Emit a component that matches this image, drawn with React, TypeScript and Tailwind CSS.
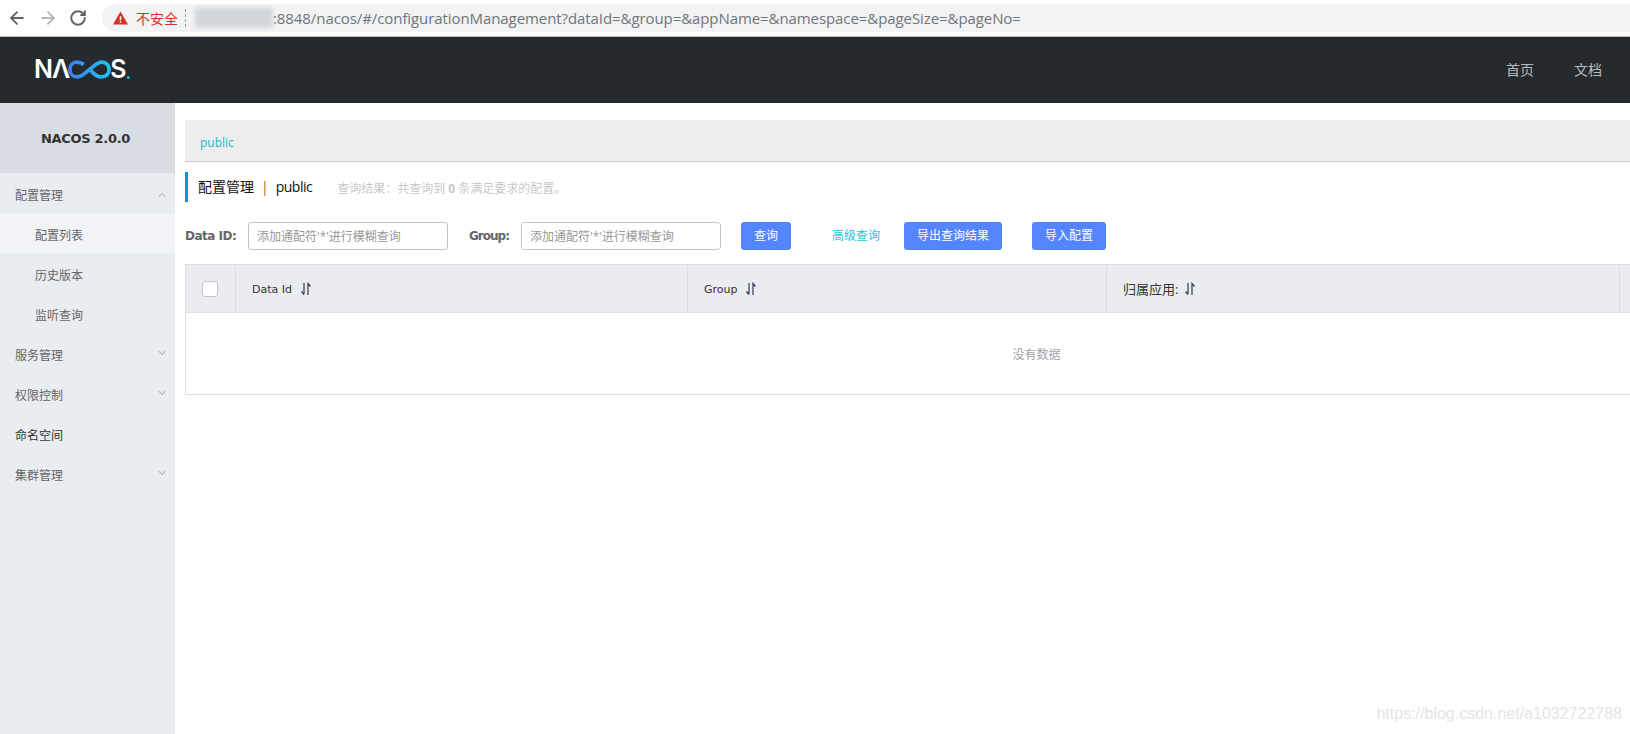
import { ArrowLeft, ArrowRight, RotateCw, ChevronDown, ChevronUp } from "lucide-react";

const cjk = "font-['Open_Sans','Noto_Sans_CJK_SC',sans-serif]";

function SortIcon({ gap = "ml-2" }: { gap?: string }) {
  return (
    <svg viewBox="0 0 12 14" className={`h-[14px] w-[12px] text-[#333a55] ${gap}`} fill="none" stroke="currentColor" strokeWidth="1.2">
      <path d="M4 1v11M1.5 9.5 4 12.5" />
      <path d="M8 13V1.5L10.500 4.500" />
    </svg>
  );
}

function NacosLogo() {
  return (
    <div className="mb-[2px] flex items-center font-['Inter',sans-serif] text-[25px] font-semibold leading-none text-white">
      <span className="tracking-[-1px]">NΛ</span>
      <svg viewBox="0 0 46 20" className="-mx-[1px] h-[19px] w-[43px]" fill="none" strokeWidth="4">
        <defs>
          <linearGradient id="nacos-loop" x1="0" y1="0" x2="1" y2="0">
            <stop offset="0" stopColor="#3f7df0" />
            <stop offset="1" stopColor="#1fc4ee" />
          </linearGradient>
        </defs>
        <path
          d="M17 4.500C14 2.400 11.500 2 9.500 2 5 2 2 5.500 2 10s3 8 7.500 8c6 0 8-4 13.500-8s7.500-8 13.500-8C40.500 2 44 5.500 44 10s-3.500 8-8.500 8c-6 0-8-4-12.500-8"
          stroke="url(#nacos-loop)"
        />
      </svg>
      <span>S</span>
      <span className="-ml-[1px] self-end text-[18px] text-[#1fc4ee]">.</span>
    </div>
  );
}

function BrowserBar() {
  return (
    <div className="flex h-[37px] items-center border-b border-[#b9b9b9] bg-white pl-[7px]">
      <ArrowLeft className="h-[20px] w-[20px] text-[#5f6368]" strokeWidth={2.2} />
      <ArrowRight className="ml-[11px] h-[20px] w-[20px] text-[#b5b7ba]" strokeWidth={2.2} />
      <RotateCw className="ml-[11px] h-[18px] w-[18px] text-[#5f6368]" strokeWidth={2.6} />
      <div className="ml-[15px] flex h-[28px] flex-1 items-center rounded-l-full bg-[#f1f3f4] pl-[11px]">
        <svg viewBox="0 0 16 14" className="h-[14px] w-[15px]">
          <path d="M8 0 16 14H0Z" fill="#d93025" />
          <path d="M7.200 5h1.600v4.500H7.200zM7.200 10.500h1.600V12H7.200z" fill="#fff" />
        </svg>
        <span className={`ml-[8px] text-[14px] text-[#d93025] ${cjk}`}>不安全</span>
        <span className="ml-[7px] h-[18px] border-l border-dashed border-[#9aa0a6]" />
        <div className="ml-[9px] h-[20px] w-[78px] bg-[#d3d6d9] blur-[2px]" />
        <span className="font-['Open_Sans',sans-serif] text-[15px] tracking-[-0.08px] whitespace-nowrap text-[#70757a]">
          :8848/nacos/#/configurationManagement?dataId=&amp;group=&amp;appName=&amp;namespace=&amp;pageSize=&amp;pageNo=
        </span>
      </div>
    </div>
  );
}

function TopNav() {
  return (
    <header className="flex h-[66px] items-center justify-between bg-[#252a2f] pl-[34px]">
      <NacosLogo />
      <nav className={`mb-[1px] flex gap-[40px] pr-[28px] text-[14px] text-[#b8babc] ${cjk}`}>
        <span>首页</span>
        <span>文档</span>
      </nav>
    </header>
  );
}

function MenuRow({ label, open, closed, dark }: { label: string; open?: boolean; closed?: boolean; dark?: boolean }) {
  return (
    <div className={`flex h-[40px] items-center justify-between pt-[6px] pr-[7px] pl-[15px] text-[12px] ${dark ? "text-[#333]" : "text-[#666]"}`}>
      <span>{label}</span>
      {open && <ChevronUp className="mb-[2px] h-[12px] w-[12px] text-[#7f8792]" strokeWidth={1.5} />}
      {closed && <ChevronDown className="mb-[6px] h-[12px] w-[12px] text-[#7f8792]" strokeWidth={1.5} />}
    </div>
  );
}

function SubRow({ label, active }: { label: string; active?: boolean }) {
  return <div className={`flex h-[40px] items-center pt-[6px] pl-[35px] text-[12px] text-[#666] ${active ? "bg-[#f2f3f7]" : ""}`}>{label}</div>;
}

function Sidebar() {
  return (
    <aside className={`w-[175px] shrink-0 bg-[#e9ecf1] ${cjk}`}>
      <div className="flex h-[70px] items-center justify-center bg-[#d8dce3] pt-[2px] pr-[4px] font-['DejaVu_Sans',sans-serif] text-[13px] font-bold tracking-[-0.3px] text-[#333]">
        NACOS 2.0.0
      </div>
      <MenuRow label="配置管理" open />
      <SubRow label="配置列表" active />
      <SubRow label="历史版本" />
      <SubRow label="监听查询" />
      <MenuRow label="服务管理" closed />
      <MenuRow label="权限控制" closed />
      <MenuRow label="命名空间" dark />
      <MenuRow label="集群管理" closed />
    </aside>
  );
}

function Field({ label, labelClass }: { label: string; labelClass: string }) {
  return (
    <div className="flex items-center">
      <span className={`font-['DejaVu_Sans','Noto_Sans_CJK_SC',sans-serif] text-[12px] font-bold text-[#666] ${labelClass}`}>{label}</span>
      <input
        readOnly
        placeholder="添加通配符'*'进行模糊查询"
        className="h-[28px] w-[200px] rounded-[3px] border border-[#c4c6cf] bg-white px-[8px] text-[12px] placeholder:text-[#999] focus:outline-none"
      />
    </div>
  );
}

function PrimaryButton({ label, width }: { label: string; width: string }) {
  return (
    <button className={`h-[28px] rounded-[3px] bg-[#5584ff] text-[12px] text-white ${width}`}>{label}</button>
  );
}

function Content() {
  return (
    <main className={`min-w-0 flex-1 pt-[17px] pl-[10px] ${cjk}`}>
      <div className="flex h-[42px] items-center border-b border-[#c8cacd] bg-[#ededed] pt-[5px] pl-[15px] text-[12px]">
        <span className="text-[#1fb6d9]">public</span>
      </div>

      <div className="mt-[10px] flex h-[30px] items-center border-l-[3px] border-[#09c] pb-[1px] pl-[10px]">
        <span className="text-[14px] text-[#111]">配置管理</span>
        <span className="mx-[7px] text-[14px] text-[#a8621c]">|</span>
        <span className="text-[14px] tracking-[-0.5px] text-[#111]">public</span>
        <span className="ml-[25px] pt-[5px] text-[12px] text-[#c9c9c9]">
          查询结果：共查询到 <strong className="font-bold">0</strong> 条满足要求的配置。
        </span>
      </div>

      <div className="mt-[20px] flex items-center">
        <Field label="Data ID:" labelClass="w-[63px] tracking-[-0.5px]" />
        <div className="ml-[21px]">
          <Field label="Group:" labelClass="w-[52px] tracking-[-1px]" />
        </div>
        <div className="ml-[20px]">
          <PrimaryButton label="查询" width="w-[50px]" />
        </div>
        <span className="ml-[41px] text-[12px] text-[#29c5e0]">高级查询</span>
        <div className="ml-[24px]">
          <PrimaryButton label="导出查询结果" width="w-[98px]" />
        </div>
        <div className="ml-[30px]">
          <PrimaryButton label="导入配置" width="w-[74px]" />
        </div>
      </div>

      <div className="mt-[14px] border border-r-0 border-[#dcdee3]">
        <div className="grid h-[47px] grid-cols-[50px_452px_419px_513px_1fr] bg-[#ebecf0] text-[12px] text-[#333]">
          <div className="flex items-center justify-center border-r border-[#dcdee3]">
            <span className="-ml-[1px] h-[16px] w-[16px] rounded-[3px] border border-[#c4c6cf] bg-white" />
          </div>
          <div className="flex items-center border-r border-[#dcdee3] pl-[16px]">
            <span className="pt-[3px] font-['DejaVu_Sans',sans-serif] text-[11px]">Data Id</span>
            <SortIcon />
          </div>
          <div className="flex items-center border-r border-[#dcdee3] pl-[16px]">
            <span className="pt-[3px] font-['DejaVu_Sans',sans-serif] text-[11px]">Group</span>
            <SortIcon gap="ml-[7px]" />
          </div>
          <div className="flex items-center border-r border-[#dcdee3] pl-[16px]">
            <span className="pt-[2px] text-[13px]">归属应用:</span>
            <SortIcon gap="ml-[6px]" />
          </div>
          <div />
        </div>
        <div className="flex h-[82px] items-center justify-center border-t border-[#dcdee3] pt-[2px] pl-[257px] text-[12px] text-[#a0a2ad]">
          没有数据
        </div>
      </div>
    </main>
  );
}

export default function App() {
  return (
    <div className="relative flex h-[734px] w-[1630px] flex-col overflow-hidden bg-white">
      <BrowserBar />
      <TopNav />
      <div className="flex flex-1">
        <Sidebar />
        <Content />
      </div>
      <span className="absolute right-[8px] bottom-[8px] font-['Liberation_Sans',sans-serif] text-[16px] text-[#e4e4e4]">
        https://blog.csdn.net/a1032722788
      </span>
    </div>
  );
}
